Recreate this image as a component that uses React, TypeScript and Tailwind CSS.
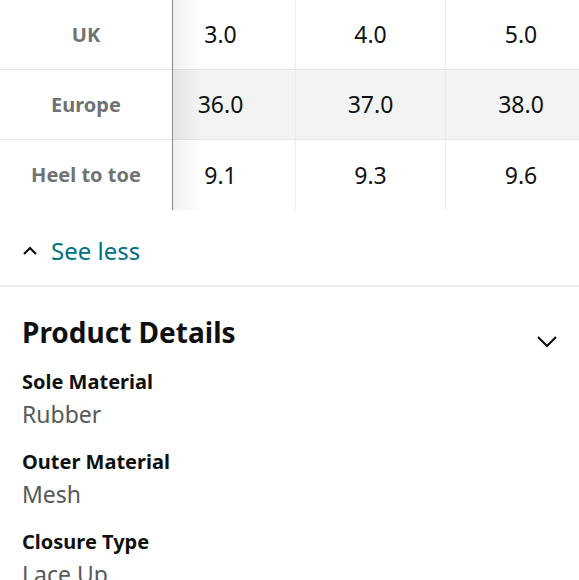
import React from 'react';

const rows = [
  { label: 'UK', values: ['3.0', '4.0', '5.0'], shaded: false },
  { label: 'Europe', values: ['36.0', '37.0', '38.0'], shaded: true },
  { label: 'Heel to toe', values: ['9.1', '9.3', '9.6'], shaded: false },
];

const details = [
  { name: 'Sole Material', value: 'Rubber' },
  { name: 'Outer Material', value: 'Mesh' },
  { name: 'Closure Type', value: 'Lace Up' },
];

export default function App() {
  return (
    <div
      className="w-[579px] h-[580px] overflow-hidden bg-white text-[#0f1111]"
      style={{ fontFamily: '"Noto Sans", Roboto, sans-serif' }}
    >
      {/* Size chart */}
      <div className="flex">
        <div className="w-[173px] shrink-0 border-r border-[#8a8a8a]">
          {rows.map((r, i) => (
            <div
              key={r.label}
              className={`h-[70px] flex items-center justify-center text-[20px] font-bold text-[#6f7373] ${i < rows.length - 1 ? 'border-b border-[#e7e7e7]' : ''}`}
            >
              {r.label}
            </div>
          ))}
        </div>
        <div className="relative flex-1 overflow-hidden">
          <div className="-ml-[27px] w-[450px]">
            {rows.map((r, i) => (
              <div
                key={r.label}
                className={`flex h-[70px] ${r.shaded ? 'bg-[#f3f3f3]' : ''} ${i < rows.length - 1 ? 'border-b border-[#e7e7e7]' : ''}`}
              >
                {r.values.map((v, j) => (
                  <div
                    key={v}
                    className={`w-[150px] shrink-0 flex items-center justify-center text-[23px] ${j < 2 ? 'border-r border-[#ececec]' : ''}`}
                  >
                    {v}
                  </div>
                ))}
              </div>
            ))}
          </div>
          <div className="pointer-events-none absolute left-0 top-0 bottom-0 w-[28px] bg-gradient-to-r from-black/[0.06] to-transparent" />
        </div>
      </div>

      {/* See less */}
      <div className="flex items-center h-[77px] pt-[6px] pl-[22px] border-b-2 border-[#eeeeee]">
        <svg width="16" height="16" viewBox="0 0 16 16" className="mr-[13px]">
          <path d="M2 11 L8 5 L14 11" fill="none" stroke="#0f1111" strokeWidth="2.2" />
        </svg>
        <span className="text-[24px] text-[#007185]">See less</span>
      </div>

      {/* Product details */}
      <div className="px-[22px] pt-[25px]">
        <div className="flex items-center justify-between">
          <h2 className="text-[28px] font-bold leading-[40px]">Product Details</h2>
          <svg width="22" height="22" viewBox="0 0 22 22" className="mt-[18px] mr-[-1px]">
            <path d="M2 7 L11 16 L20 7" fill="none" stroke="#0f1111" strokeWidth="2.2" />
          </svg>
        </div>
        <div className="mt-[14px] flex flex-col gap-[16px]">
          {details.map((d) => (
            <div key={d.name}>
              <div className="text-[20px] font-bold leading-[32px]">{d.name}</div>
              <div className="text-[23px] leading-[32px] text-[#565959]">{d.value}</div>
            </div>
          ))}
        </div>
      </div>
    </div>
  );
}
